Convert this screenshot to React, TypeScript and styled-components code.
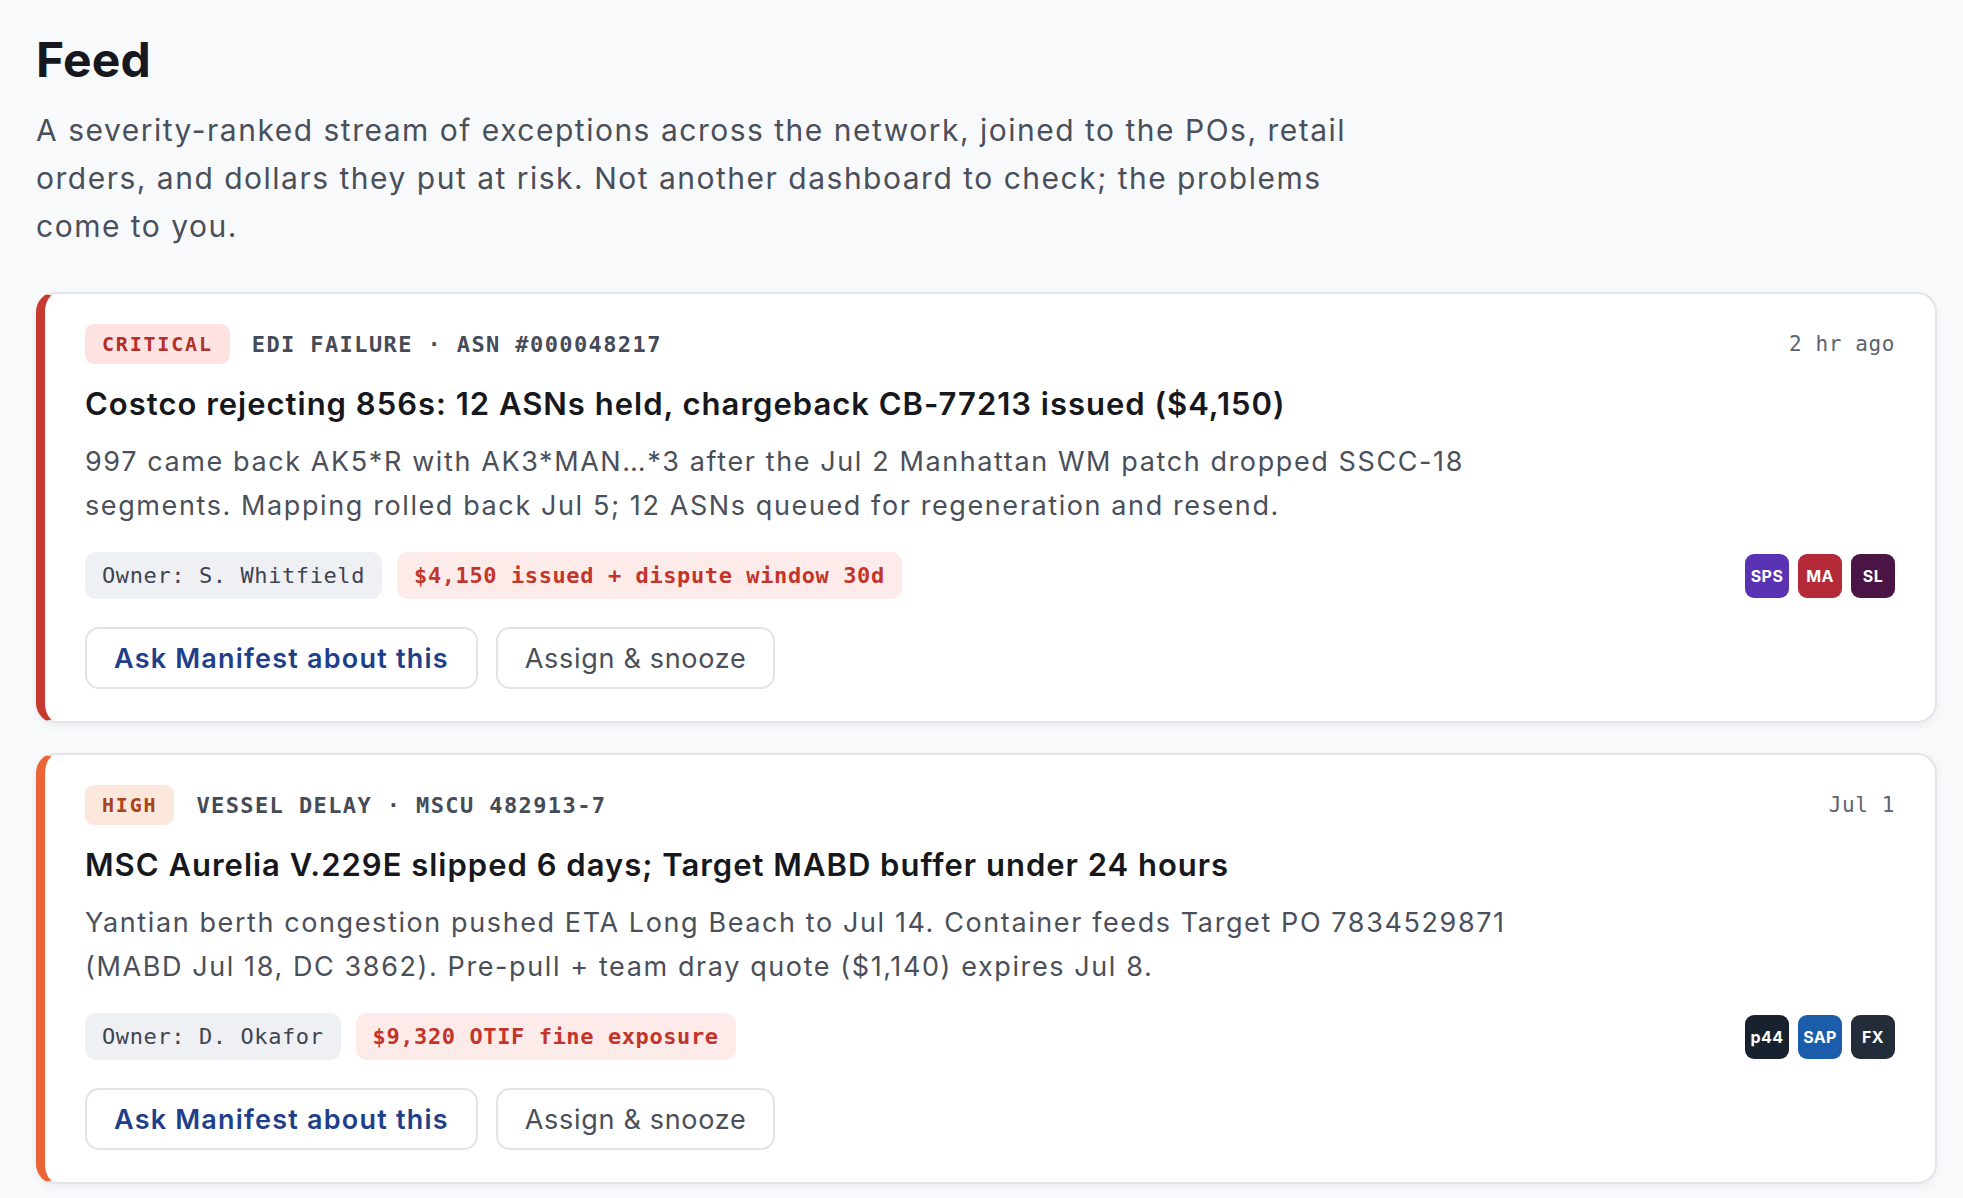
import React from 'react';
import styled, { createGlobalStyle } from 'styled-components';

const GlobalStyle = createGlobalStyle`
  html, body {
    margin: 0;
    padding: 0;
    background: #f8f9fb;
  }
  body {
    font-family: "Inter", "Noto Sans", sans-serif;
    color: #16181d;
  }
`;

const SANS = `"Inter", "Noto Sans", sans-serif`;
const MONO = `"DejaVu Sans Mono", "Liberation Mono", monospace`;

type Tone = 'critical' | 'high';

const tones: Record<Tone, { accent: string; badgeBg: string; badgeFg: string }> = {
  critical: { accent: '#c8392f', badgeBg: '#fce3e1', badgeFg: '#b3302a' },
  high: { accent: '#ea6435', badgeBg: '#fce7dd', badgeFg: '#a8431a' },
};

const Page = styled.main`
  padding: 31px 26px 40px 36px;
  min-height: 100vh;
  box-sizing: border-box;
`;

const Heading = styled.h1`
  margin: 0;
  font-family: ${SANS};
  font-size: 48px;
  line-height: 58px;
  font-weight: 700;
  letter-spacing: 0.2px;
  color: #16181d;
`;

const Lede = styled.p`
  margin: 17px 0 0;
  max-width: 1320px;
  font-family: ${SANS};
  font-size: 30px;
  line-height: 48px;
  letter-spacing: 1.5px;
  color: #4a4f5a;
`;

const FeedList = styled.div`
  margin-top: 42px;
  display: flex;
  flex-direction: column;
  gap: 30px;
`;

const Card = styled.article<{ $accent: string }>`
  background: #ffffff;
  border: 2px solid #e4e5e8;
  border-left: 9px solid ${(p) => p.$accent};
  border-radius: 20px;
  padding: 30px 40px 32px 40px;
  box-shadow: 0 3px 8px rgba(20, 24, 40, 0.05);
`;

const CardHeader = styled.div`
  display: flex;
  align-items: center;
  justify-content: space-between;
  height: 40px;
`;

const HeaderLeft = styled.div`
  display: flex;
  align-items: center;
  gap: 22px;
`;

const SeverityBadge = styled.span<{ $bg: string; $fg: string }>`
  display: inline-flex;
  align-items: center;
  height: 40px;
  padding: 0 17px;
  border-radius: 9px;
  background: ${(p) => p.$bg};
  color: ${(p) => p.$fg};
  font-family: ${MONO};
  font-size: 20px;
  font-weight: 700;
  letter-spacing: 1.8px;
`;

const Meta = styled.span`
  font-family: ${MONO};
  font-size: 22px;
  font-weight: 700;
  letter-spacing: 1.4px;
  color: #454b57;
`;

const Time = styled.span`
  font-family: ${MONO};
  font-size: 21px;
  letter-spacing: 0.6px;
  color: #5c6370;
`;

const Title = styled.h3`
  margin: 20px 0 0;
  font-family: ${SANS};
  font-size: 31px;
  line-height: 40px;
  font-weight: 600;
  letter-spacing: 1px;
  color: #16181d;
`;

const Description = styled.p`
  margin: 16px 0 0;
  max-width: 1450px;
  font-family: ${SANS};
  font-size: 27px;
  line-height: 44px;
  letter-spacing: 1.6px;
  color: #4a4f59;
`;

const TagRow = styled.div`
  margin-top: 24px;
  display: flex;
  align-items: center;
  justify-content: space-between;
`;

const Chips = styled.div`
  display: flex;
  gap: 15px;
`;

const Chip = styled.span<{ $risk?: boolean }>`
  display: inline-flex;
  align-items: center;
  height: 47px;
  padding: 0 17px;
  border-radius: 11px;
  background: ${(p) => (p.$risk ? '#fdebe9' : '#eef0f4')};
  color: ${(p) => (p.$risk ? '#c3352b' : '#3f4451')};
  font-family: ${MONO};
  font-size: 22px;
  font-weight: ${(p) => (p.$risk ? 700 : 400)};
  letter-spacing: 0.6px;
`;

const Sources = styled.div`
  display: flex;
  gap: 9px;
`;

const SourceIcon = styled.span<{ $bg: string }>`
  width: 44px;
  height: 44px;
  border-radius: 9px;
  background: ${(p) => p.$bg};
  color: #ffffff;
  display: flex;
  align-items: center;
  justify-content: center;
  font-family: ${SANS};
  font-size: 16px;
  font-weight: 700;
  letter-spacing: 0.4px;
`;

const Actions = styled.div`
  margin-top: 28px;
  display: flex;
  gap: 18px;
`;

const Button = styled.button<{ $primary?: boolean }>`
  height: 62px;
  padding: 0 27px;
  border: 2px solid #e3e4e7;
  border-radius: 14px;
  background: #ffffff;
  font-family: ${SANS};
  font-size: 27px;
  font-weight: ${(p) => (p.$primary ? 600 : 400)};
  letter-spacing: ${(p) => (p.$primary ? '1.2px' : '0.7px')};
  color: ${(p) => (p.$primary ? '#1f3f8a' : '#4a4f59')};
  cursor: pointer;
`;

interface FeedItem {
  tone: Tone;
  label: string;
  meta: string;
  time: string;
  title: string;
  body: string;
  owner: string;
  risk: string;
  sources: { name: string; color: string }[];
}

const items: FeedItem[] = [
  {
    tone: 'critical',
    label: 'CRITICAL',
    meta: 'EDI FAILURE · ASN #000048217',
    time: '2 hr ago',
    title: 'Costco rejecting 856s: 12 ASNs held, chargeback CB-77213 issued ($4,150)',
    body: '997 came back AK5*R with AK3*MAN…*3 after the Jul 2 Manhattan WM patch dropped SSCC-18 segments. Mapping rolled back Jul 5; 12 ASNs queued for regeneration and resend.',
    owner: 'Owner: S. Whitfield',
    risk: '$4,150 issued + dispute window 30d',
    sources: [
      { name: 'SPS', color: '#5a33b4' },
      { name: 'MA', color: '#b52a39' },
      { name: 'SL', color: '#4a1545' },
    ],
  },
  {
    tone: 'high',
    label: 'HIGH',
    meta: 'VESSEL DELAY · MSCU 482913-7',
    time: 'Jul 1',
    title: 'MSC Aurelia V.229E slipped 6 days; Target MABD buffer under 24 hours',
    body: 'Yantian berth congestion pushed ETA Long Beach to Jul 14. Container feeds Target PO 7834529871 (MABD Jul 18, DC 3862). Pre-pull + team dray quote ($1,140) expires Jul 8.',
    owner: 'Owner: D. Okafor',
    risk: '$9,320 OTIF fine exposure',
    sources: [
      { name: 'p44', color: '#18222e' },
      { name: 'SAP', color: '#1c5dab' },
      { name: 'FX', color: '#222d39' },
    ],
  },
];

export default function App() {
  return (
    <>
      <GlobalStyle />
      <Page>
        <Heading>Feed</Heading>
        <Lede>
          A severity-ranked stream of exceptions across the network, joined to the POs, retail
          orders, and dollars they put at risk. Not another dashboard to check; the problems
          come to you.
        </Lede>
        <FeedList>
          {items.map((item) => {
            const tone = tones[item.tone];
            return (
              <Card key={item.meta} $accent={tone.accent}>
                <CardHeader>
                  <HeaderLeft>
                    <SeverityBadge $bg={tone.badgeBg} $fg={tone.badgeFg}>
                      {item.label}
                    </SeverityBadge>
                    <Meta>{item.meta}</Meta>
                  </HeaderLeft>
                  <Time>{item.time}</Time>
                </CardHeader>
                <Title>{item.title}</Title>
                <Description>{item.body}</Description>
                <TagRow>
                  <Chips>
                    <Chip>{item.owner}</Chip>
                    <Chip $risk>{item.risk}</Chip>
                  </Chips>
                  <Sources>
                    {item.sources.map((s) => (
                      <SourceIcon key={s.name} $bg={s.color}>
                        {s.name}
                      </SourceIcon>
                    ))}
                  </Sources>
                </TagRow>
                <Actions>
                  <Button $primary>Ask Manifest about this</Button>
                  <Button>Assign &amp; snooze</Button>
                </Actions>
              </Card>
            );
          })}
        </FeedList>
      </Page>
    </>
  );
}
